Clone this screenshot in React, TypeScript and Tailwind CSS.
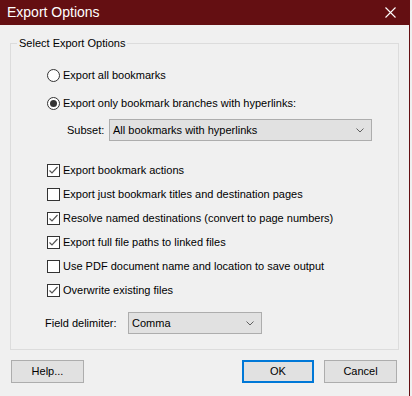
import type { ReactNode } from 'react'

const font = { fontFamily: '"Liberation Sans", Arial, sans-serif' }

function Radio({ checked, children }: { checked?: boolean; children: ReactNode }) {
  return (
    <div className="flex h-[24px] items-center">
      <span className="flex h-[13px] w-[13px] items-center justify-center rounded-full border border-[#333333] bg-white">
        {checked && <span className="h-[7px] w-[7px] rounded-full bg-[#333333]" />}
      </span>
      <span className="ml-[3px]">{children}</span>
    </div>
  )
}

function Check({ checked, children }: { checked?: boolean; children: ReactNode }) {
  return (
    <div className="flex h-[24px] items-center">
      <span className="flex h-[13px] w-[13px] items-center justify-center border border-[#333333] bg-white">
        {checked && (
          <svg width="11" height="11" viewBox="0 0 11 11" fill="none">
            <path d="M1.5 5.5 L4 8 L9.5 2" stroke="#555555" strokeWidth="1.2" />
          </svg>
        )}
      </span>
      <span className="ml-[3px]">{children}</span>
    </div>
  )
}

function Combo({ value, className }: { value: string; className: string }) {
  return (
    <div className={`flex h-[22px] items-center justify-between border border-[#adadad] bg-[#e1e1e1] pl-[3px] pr-[7px] ${className}`}>
      <span>{value}</span>
      <svg width="8" height="5" viewBox="0 0 8 5" fill="none">
        <path d="M0.5 0.5 L4 4 L7.5 0.5" stroke="#606060" strokeWidth="1" />
      </svg>
    </div>
  )
}

export default function App() {
  return (
    <div className="h-[396px] w-[412px] bg-[#f0f0f0] text-[11px] text-black" style={font}>
      <div className="flex h-[396px] w-[410px] flex-col border-r border-[#650f12]">
        <div className="flex h-[25px] items-center justify-between bg-[#640f12] pl-[7px] pr-[13px] text-[14px] text-white">
          <span>Export Options</span>
          <svg width="11" height="11" viewBox="0 0 11 11" fill="none">
            <path d="M0.5 0.5 L10.5 10.5 M10.5 0.5 L0.5 10.5" stroke="#ffffff" strokeWidth="1.1" />
          </svg>
        </div>

        <div className="px-[10px] pt-[18px]">
          <div className="relative h-[307px] w-[389px] border border-[#dcdcdc]">
            <span className="absolute -top-[8px] left-[6px] bg-[#f0f0f0] px-[2px] leading-[14px]">
              Select Export Options
            </span>

            <div className="flex flex-col pl-[36px] pt-[19px]">
              <Radio>Export all bookmarks</Radio>
              <div className="mt-[4px]">
                <Radio checked>Export only bookmark branches with hyperlinks:</Radio>
              </div>
              <div className="mt-[4px] flex items-center pl-[20px]">
                <span className="w-[42px]">Subset:</span>
                <Combo value="All bookmarks with hyperlinks" className="w-[263px]" />
              </div>

              <div className="mt-[17px] flex flex-col">
                <Check checked>Export bookmark actions</Check>
                <Check>Export just bookmark titles and destination pages</Check>
                <Check checked>Resolve named destinations (convert to page numbers)</Check>
                <Check checked>Export full file paths to linked files</Check>
                <Check>Use PDF document name and location to save output</Check>
                <Check checked>Overwrite existing files</Check>
              </div>

              <div className="-ml-[2px] mt-[10px] flex items-center">
                <span className="w-[83px]">Field delimiter:</span>
                <Combo value="Comma" className="w-[134px]" />
              </div>
            </div>
          </div>

          <div className="mt-[10px] flex items-center">
            <button className="ml-[1px] h-[23px] w-[73px] border border-[#adadad] bg-[#e1e1e1]">Help...</button>
            <button className="ml-[158px] h-[23px] w-[72px] border-2 border-[#0078d7] bg-[#e1e1e1]">OK</button>
            <button className="ml-[10px] h-[23px] w-[73px] border border-[#adadad] bg-[#e1e1e1]">Cancel</button>
          </div>
        </div>
      </div>
    </div>
  )
}
